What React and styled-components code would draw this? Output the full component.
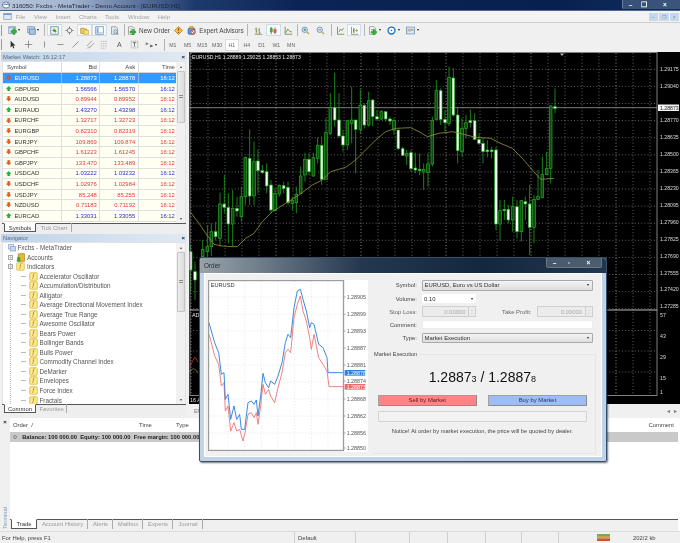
import React from "react";
import styled, { createGlobalStyle } from "styled-components";

const Global = createGlobalStyle`
  html, body { margin: 0; padding: 0; overflow: hidden; background: #f0f0f0; }
  * { box-sizing: border-box; }
`;

const Page = styled.div`
  position: relative;
  width: 680px;
  height: 543px;
  overflow: hidden;
  display: flex;
  flex-direction: column;
  background: #f0f0f0;
  font-family: "Liberation Sans", Arial, sans-serif;
  font-size: 6px;
  color: #333;
  filter: blur(0.3px);
`;

/* title bar */
const TitleBar = styled.div`
  height: 11px;
  flex: none;
  display: flex;
  align-items: center;
  justify-content: space-between;
  padding-left: 2px;
  background: linear-gradient(90deg, #b9c7dc 0, #a4b4cf 70px, #5e769f 135px, #1e3a6c 195px, #0c2455 300px, #08204f 560px, #12305f 680px);
  border-bottom: 1px solid #53678c;
`;
const TitleLeft = styled.div`
  display: flex;
  align-items: center;
  gap: 2px;
  color: #1e2430;
  font-size: 6.2px;
`;
const CaptionGroup = styled.div`
  display: flex;
  align-self: stretch;
  margin-bottom: 1px;
  background: rgba(150, 165, 190, 0.32);
  border-left: 1px solid #6b7f9e;
  border-radius: 0 0 0 2px;
`;
const CaptionBtn = styled.span`
  width: ${(p) => p.$w}px;
  display: flex;
  align-items: center;
  justify-content: center;
  color: #fff;
  font-size: 6.5px;
  font-weight: bold;
`;

/* menu */
const MenuBar = styled.div`
  height: 12px;
  flex: none;
  display: flex;
  align-items: center;
  padding-left: 3px;
  background: #f3f3f3;
  border-bottom: 1px solid #cfcfcf;
  color: #a2a2a2;
  font-size: 6px;
`;
const MenuItem = styled.span`
  width: ${(p) => p.$w}px;
  flex: none;
`;
const MdiGroup = styled.div`
  margin-left: auto;
  display: flex;
  gap: 1px;
  padding-right: 1px;
`;
const MdiBtn = styled.span`
  width: 9.5px;
  height: 8px;
  background: #c5d8ec;
  display: flex;
  align-items: center;
  justify-content: center;
  color: #7e90a8;
  font-size: 5px;
`;

/* toolbars */
const Toolbar = styled.div`
  height: 14.5px;
  flex: none;
  display: flex;
  align-items: center;
  padding-left: 1px;
  background: #f0f0f0;
`;
const Grip = styled.span`
  width: 1px;
  height: 11px;
  margin-right: 3px;
  background: #9a9a9a;
`;
const Tool = styled.span`
  width: ${(p) => p.$w || 15}px;
  height: 12px;
  flex: none;
  display: flex;
  align-items: center;
  justify-content: center;
  gap: 1.5px;
  border: 1px solid ${(p) => (p.$on ? "#d0dbe8" : "transparent")};
  background: ${(p) => (p.$on ? "#f7fafd" : "transparent")};
`;
const TextTool = styled(Tool)`
  gap: 3px;
  color: #444;
  font-size: 6.4px;
  white-space: nowrap;
`;
const ToolLetter = styled.span`
  color: #555;
  font-size: 7px;
`;
const Period = styled.span`
  width: 14.8px;
  height: 12px;
  flex: none;
  display: flex;
  align-items: center;
  justify-content: center;
  color: #666;
  font-size: 5.2px;
  border: 1px solid ${(p) => (p.$on ? "#dcdcdc" : "transparent")};
  background: ${(p) => (p.$on ? "#fff" : "transparent")};
`;
const Sep = styled.span`
  width: 1px;
  height: 12px;
  flex: none;
  margin: 0 ${(p) => p.$r}px 0 ${(p) => p.$l}px;
  background: #b4b4b4;
`;
const Caret = styled.span`
  width: 0;
  height: 0;
  flex: none;
  border-left: 1.5px solid transparent;
  border-right: 1.5px solid transparent;
  border-top: 2px solid #222;
`;

/* main */
const Main = styled.div`
  height: 366px;
  flex: none;
  display: flex;
`;
const LeftCol = styled.div`
  width: 189px;
  flex: none;
  display: flex;
  flex-direction: column;
`;
const Panel = styled.div`
  height: ${(p) => p.$h}px;
  flex: none;
  display: flex;
  flex-direction: column;
  padding: 0 3px 0 2px;
`;
const PanelHead = styled.div`
  height: ${(p) => p.$h || 9}px;
  flex: none;
  display: flex;
  align-items: center;
  justify-content: space-between;
  padding: 0 2px;
  margin: 0 -1px;
  background: linear-gradient(90deg, #c0d3e8, #d6e3f1 70%, #dfe9f3);
  color: #5b6b7d;
  font-size: 5.9px;
`;
const PanelClose = styled.span`
  color: #111;
  font-size: 6px;
  font-weight: bold;
`;
const PanelBody = styled.div`
  flex: 1;
  min-height: 0;
  display: flex;
  background: #fff;
  border: 1px solid #e2e2e2;
  border-bottom: 0;
`;
const Scroll = styled.div`
  width: 9px;
  flex: none;
  display: flex;
  flex-direction: column;
  background: #f1f1f1;
  color: #444;
  font-size: 4px;
  align-items: center;
  padding-top: 2px;
`;
const ScrollThumb = styled.div`
  width: 8px;
  height: ${(p) => p.$h}px;
  margin-top: 2px;
  background: linear-gradient(90deg, #ececec, #dcdcdc);
  border: 1px solid #c4c4c4;
  border-radius: 1px;
  display: flex;
  align-items: center;
  justify-content: center;
`;
const ScrollGrip = styled.span`
  width: 4px;
  height: 4px;
  background: repeating-linear-gradient(#8a8a8a 0 1px, transparent 1px 2px);
`;
const ScrollEnd = styled.span`
  margin-top: auto;
  margin-bottom: 2px;
`;
const TabStrip = styled.div`
  height: ${(p) => p.$h || 11}px;
  flex: none;
  display: flex;
  align-items: flex-start;
  padding-left: ${(p) => p.$l || 2}px;
  border-top: 1px solid #555;
  background: #eee;
  color: #9a9a9a;
  font-size: 5.9px;
`;
const Tab = styled.span`
  display: flex;
  align-items: center;
  justify-content: center;
  height: 9px;
  width: ${(p) => p.$w}px;
  margin-top: -1px;
  flex: none;
  ${(p) =>
    p.$on
      ? "background:#fff; color:#333; border:1px solid #555; border-top-color:#fff;"
      : "border-right:1px solid #aaa; margin-left:1px;"}
`;

/* market watch */
const MarketTable = styled.div`
  flex: 1;
  min-width: 0;
  overflow: hidden;
`;
const MarketRow = styled.div`
  display: grid;
  grid-template-columns: 58px 38.4px 38.3px 39.7px;
  height: ${(p) => p.$h || 10.6}px;
  align-items: stretch;
  font-size: 5.9px;
  background: ${(p) => (p.$head ? "#fff" : p.$sel ? "#3399ff" : "#fffff2")};
  color: ${(p) => (p.$head ? "#444" : p.$sel ? "#fff" : "#333")};
  border-bottom: 1px solid ${(p) => (p.$head ? "#d5d5d5" : "#dedede")};
`;
const SymbolCell = styled.span`
  display: flex;
  align-items: center;
  gap: 3px;
  padding-left: ${(p) => (p.$head ? 4 : 3)}px;
`;
const NumCell = styled.span`
  display: flex;
  align-items: center;
  justify-content: flex-end;
  padding-right: 2.5px;
  border-left: 1px solid ${(p) => (p.$sel ? "#83bdf5" : "#dedede")};
  color: ${(p) => p.$c};
`;

/* navigator */
const Tree = styled.div`
  flex: 1;
  min-width: 0;
  overflow: hidden;
  position: relative;
`;
const TreeRow = styled.div`
  height: 9.53px;
  display: flex;
  align-items: center;
  gap: 2px;
  padding-left: ${(p) => p.$pad}px;
  color: #555;
  font-size: 6.3px;
  white-space: nowrap;
`;
const TreeSign = styled.span`
  width: 5px;
  height: 5px;
  border: 1px solid #aaa;
  background: #fff;
  color: #666;
  font-size: 4.5px;
  line-height: 3px;
  text-align: center;
  margin-right: 1px;
`;
const TreeDash = styled.span`
  width: 5px;
  height: 1px;
  background: #bbb;
  margin-right: 0.5px;
`;
const TreeLine = styled.span`
  position: absolute;
  left: 7px;
  top: 14px;
  bottom: 0;
  border-left: 1px dotted #bbb;
`;

/* chart column */
const RightCol = styled.div`
  flex: 1;
  min-width: 0;
  display: flex;
  flex-direction: column;
`;
const ChartSvg = styled.svg`
  display: block;
  width: 491px;
  height: 352px;
  flex: none;
  background: #000;
`;
const ChartTabs = styled.div`
  flex: 1;
  display: flex;
  align-items: center;
  padding: 0 3px;
  color: #777;
  font-size: 5.9px;
  gap: 4px;
`;
const ChartTab = styled.span`
  margin-right: auto;
  padding: 0 2px;
`;

/* terminal */
const Terminal = styled.div`
  height: 113px;
  flex: none;
  display: flex;
`;
const TermStrip = styled.div`
  width: 10px;
  flex: none;
  display: flex;
  flex-direction: column;
  align-items: center;
  background: #f0f0f0;
`;
const TermClose = styled.span`
  color: #111;
  font-weight: bold;
  font-size: 6px;
  line-height: 8px;
`;
const TermLabel = styled.span`
  margin-top: auto;
  margin-bottom: 2px;
  writing-mode: vertical-rl;
  transform: rotate(180deg);
  color: #7f96b0;
  font-size: 5.8px;
`;
const TermPanel = styled.div`
  flex: 1;
  min-width: 0;
  display: flex;
  flex-direction: column;
  background: #fff;
`;
const TermHead = styled.div`
  height: 14px;
  flex: none;
  display: grid;
  grid-template-columns: 126px 37px 1fr auto;
  align-items: center;
  padding: 0 6px 0 3px;
  color: #444;
  font-size: 5.9px;
`;
const BalanceRow = styled.div`
  height: 10px;
  flex: none;
  margin-right: 2px;
  display: flex;
  align-items: center;
  background: #c9c9c9;
  padding-left: 3px;
  gap: 3.2px;
  color: #222;
  font-weight: bold;
  font-size: 5.8px;
  white-space: nowrap;
`;
const BalanceDot = styled.span`
  width: 4px;
  height: 4px;
  border-radius: 50%;
  border: 1px solid #888;
  margin-right: 2px;
`;
const TermTabs = styled(TabStrip)`
  margin-top: auto;
  height: 12px;
  background: #f0f0f0;
  padding-left: 1px;
  margin-right: 2px;
`;
const TermTab = styled(Tab)`
  height: 10px;
`;

/* status */
const StatusBar = styled.div`
  height: 12px;
  flex: none;
  display: grid;
  grid-template-columns: 295px 61px 54px 38px 38px 36px 37px 1fr;
  align-items: center;
  background: #f0f0f0;
  border-top: 1px solid #dcdcdc;
  color: #444;
  font-size: 5.9px;
`;
const StatusCell = styled.span`
  height: 100%;
  display: flex;
  align-items: center;
  padding-left: ${(p) => p.$pad || 0}px;
  border-right: 1px solid ${(p) => (p.$end ? "transparent" : "#cfcfcf")};
`;
const StatusEnd = styled(StatusCell)`
  gap: 23px;
  padding-left: 38px;
`;
const ConnBars = styled.svg`
  display: block;
  flex: none;
  width: 13px;
  height: 7px;
`;

/* order dialog */
const Dialog = styled.div`
  position: absolute;
  left: 199px;
  top: 257px;
  width: 408px;
  height: 205px;
  display: flex;
  flex-direction: column;
  padding: 0 4px 4px;
  border: 1px solid #39506c;
  border-radius: 3px 3px 2px 2px;
  background: linear-gradient(90deg, #c3d3e6, #bed3e9);
  box-shadow: 1px 1px 2px rgba(0, 0, 0, 0.55);
`;
const DialogTitle = styled.div`
  position: relative;
  height: 15px;
  flex: none;
  margin: 0 -4px;
  display: flex;
  justify-content: space-between;
  padding-left: 4px;
  background: linear-gradient(90deg, #99a2a8 0, #6f7d8b 60px, #24384f 160px, #13273f 280px, #20384f 400px);
  color: #2b2f33;
  font-size: 6.4px;
  border-radius: 3px 3px 0 0;
`;
const DialogName = styled.span`
  padding-top: 4px;
`;
const DialogCaps = styled.div`
  display: flex;
  height: 10px;
  margin-right: 4px;
  background: rgba(130, 140, 150, 0.45);
  border: 1px solid rgba(120, 135, 150, 0.7);
  border-top: 0;
  border-radius: 0 0 2px 2px;
`;
const DialogBody = styled.div`
  flex: 1;
  min-height: 0;
  display: flex;
  padding: 6px 0 0 3px;
  background: #f0f0f0;
  border: 1px solid #fff;
`;
const OrderChart = styled.svg`
  display: block;
  width: 160px;
  height: 172px;
  flex: none;
  background: #fff;
`;
const Form = styled.div`
  width: 222px;
  flex: none;
  margin-left: 6px;
  display: flex;
  flex-direction: column;
`;
const FormRow = styled.div`
  height: ${(p) => p.$h}px;
  flex: none;
  display: grid;
  grid-template-columns: ${(p) => p.$cols || "43px 171px"};
  align-items: stretch;
  margin-bottom: 3.4px;
  column-gap: 5px;
  font-size: 5.9px;
  color: #444;
`;
const FormLabel = styled.span`
  display: flex;
  align-items: center;
  justify-content: flex-end;
  color: ${(p) => p.$c || "#444"};
`;
const Select = styled.span`
  display: flex;
  align-items: center;
  justify-content: space-between;
  padding: 0 3px 0 1.5px;
  background: linear-gradient(#f4f4f4, #dedede);
  border: 1px solid #a9a9a9;
  border-radius: 1px;
  color: #333;
`;
const Combo = styled(Select)`
  width: 54px;
  padding-left: 2px;
  background: #fff;
  border: 0;
  color: #333;
`;
const Spin = styled.span`
  display: flex;
  align-items: center;
  justify-content: flex-end;
  background: #ececec;
  border: 1px solid #cfcfcf;
  color: #aaa;
`;
const SpinBtn = styled.span`
  width: 7px;
  height: 100%;
  margin-left: 2.5px;
  border-left: 1px solid #cfcfcf;
  display: flex;
  flex-direction: column;
  align-items: center;
  justify-content: space-around;
  padding: 1.5px 0;
`;
const Tri = styled.span`
  width: 0;
  height: 0;
  border-left: 1.4px solid transparent;
  border-right: 1.4px solid transparent;
  ${(p) => (p.$up ? "border-bottom:1.6px solid #bbb;" : "border-top:1.6px solid #bbb;")}
`;
const TextInput = styled.span`
  background: #fff;
  border: 1px solid #ececec;
`;
const Group = styled.div`
  position: relative;
  margin-top: 7px;
  width: 222px;
  height: 100px;
  padding: 14px 8.3px 0 4px;
  border-top: 1px solid #e6e6e6;
  border-right: 1px solid #e6e6e6;
  border-bottom: 1px solid #e6e6e6;
`;
const GroupLabel = styled.span`
  position: absolute;
  left: 0;
  top: -3.5px;
  padding-right: 2px;
  background: #f0f0f0;
  color: #444;
  font-size: 5.6px;
`;
const Prices = styled.div`
  height: 17px;
  text-align: center;
  color: #111;
  font-size: 14px;
  line-height: 17px;
  white-space: pre;
`;
const Small = styled.span`
  font-size: 9px;
`;
const Buttons = styled.div`
  margin-top: 9px;
  display: flex;
  justify-content: space-between;
`;
const MarketBtn = styled.span`
  width: 98.5px;
  height: 11px;
  display: flex;
  align-items: center;
  justify-content: center;
  background: ${(p) => p.$bg};
  border: 1px solid #a0a0a0;
  border-right-color: #8c8c8c;
  border-bottom-color: #8c8c8c;
  color: ${(p) => p.$c};
  font-size: 5.9px;
`;
const Progress = styled.div`
  margin-top: 5px;
  height: 11px;
  background: #f2f2f2;
  border: 1px solid #d4d4d4;
  border-radius: 1px;
`;
const Notice = styled.div`
  margin-top: 6px;
  text-align: center;
  color: #444;
  font-size: 5.75px;
  white-space: nowrap;
`;

/* ---------- icons ---------- */
const Ico = ({ s = 9, children, vb = "0 0 12 12" }) => (
  <svg width={s} height={s} viewBox={vb} style={{ display: "block", flex: "none" }}>
    {children}
  </svg>
);
const Doc = () => <path d="M2 1h6l2 2v8H2z" fill="#fff" stroke="#8b8b8b" />;
const GreenPlus = ({ x = 0, y = 0 }) => (
  <path transform={`translate(${x} ${y})`} d="M6 4h2.6v2.6h2.6v2.6H8.6v2.6H6V9.2H3.4V6.6H6z" fill="#2fb52f" stroke="#178017" strokeWidth="0.4" />
);
const icons = {
  logo: (
    <>
      <ellipse cx="6" cy="6" rx="5.5" ry="4.5" fill="#fff" stroke="#2b4a9a" />
      <path d="M2 6.5l2.5-2.5 2 2 2-2L10 6.5" fill="none" stroke="#2b4a9a" strokeWidth="1.4" />
    </>
  ),
  mdi: (
    <>
      <rect x="1" y="2" width="10" height="8" fill="#dfe8f4" stroke="#8aa0c0" />
      <rect x="1" y="2" width="10" height="2" fill="#7c9ac8" />
    </>
  ),
  newChart: (
    <>
      <rect x="1" y="1" width="9" height="9" fill="#dbe6f2" stroke="#7d93ad" />
      <rect x="1" y="1" width="9" height="2" fill="#9db6d3" />
      <GreenPlus x="0.5" y="-0.5" />
    </>
  ),
  profiles: (
    <>
      <rect x="1" y="1" width="9" height="8" fill="#c9d9ec" stroke="#6f8fb8" />
      <rect x="3" y="4" width="8" height="7" fill="#a9c3e2" stroke="#5d7fae" />
    </>
  ),
  market: (
    <>
      <rect x="1" y="1" width="10" height="10" fill="#eaf4ea" stroke="#5f7f9f" />
      <path d="M3 6l3-3v2h2v2H6v1z" fill="#2fa52f" />
      <path d="M9 6.5l-2 3v-1.5H5v-1.5z" fill="#e0662a" />
    </>
  ),
  cross: (
    <>
      <circle cx="6" cy="6" r="3" fill="none" stroke="#6b6b6b" />
      <path d="M6 0.5v3M6 8.5v3M0.5 6h3M8.5 6h3" stroke="#6b6b6b" />
    </>
  ),
  navigator: (
    <>
      <path d="M1 3h4l1 1h3v6H1z" fill="#f4d15b" stroke="#a98a2c" />
      <path d="M5 5h4l1 1h2v5H5z" fill="#f7de7e" stroke="#a98a2c" strokeWidth="0.7" />
    </>
  ),
  terminal: (
    <>
      <rect x="1" y="1" width="10" height="10" fill="#fff" stroke="#5f85b5" />
      <rect x="2" y="2" width="3" height="8" fill="#8fb2dc" />
      <rect x="5" y="8" width="5" height="2" fill="#bcd1ea" />
    </>
  ),
  tester: (
    <>
      <path d="M2 1h6l2 2v8H2z" fill="#e6e6e6" stroke="#8f8f8f" />
      <circle cx="7.5" cy="7.5" r="2.4" fill="#cfe0f2" stroke="#6c88a8" />
      <path d="M9.2 9.2l2 2" stroke="#5a6e86" />
    </>
  ),
  newOrder: (
    <>
      <Doc />
      <path d="M3.5 3.5h4M3.5 5.5h3" stroke="#aaa" strokeWidth="0.8" />
      <GreenPlus x="0.5" y="0.2" />
    </>
  ),
  editor: (
    <>
      <path d="M6 0.7L11.3 6 6 11.3 0.7 6z" fill="#f4c62e" stroke="#a3801c" />
      <path d="M6 3v3.5" stroke="#c0392b" strokeWidth="1.6" />
      <circle cx="6" cy="8.5" r="0.9" fill="#c0392b" />
    </>
  ),
  expert: (
    <>
      <rect x="1.5" y="3" width="9" height="8" rx="1.5" fill="#5d9ad8" stroke="#2f5f98" />
      <path d="M3 3a3 3 0 0 1 6 0z" fill="#f0b429" stroke="#a97c10" strokeWidth="0.6" />
      <circle cx="8" cy="8" r="2.8" fill="#fff" stroke="#d8321f" strokeWidth="1.2" />
      <path d="M6 6l4 4" stroke="#d8321f" strokeWidth="1.1" />
    </>
  ),
  bars: <path d="M3 2v8M1.5 4H3M3 7h1.5M7 3v8M5.5 5H7M7 9h1.5M1 11h10" stroke="#6d7f3f" fill="none" />,
  candles: (
    <>
      <path d="M3 1v10M8 2v9" stroke="#3f7a2e" />
      <rect x="1.5" y="3" width="3" height="5" fill="#47b13c" stroke="#3f7a2e" strokeWidth="0.5" />
      <rect x="6.5" y="5" width="3" height="4" fill="#e2602a" stroke="#a0451c" strokeWidth="0.5" />
    </>
  ),
  line: <path d="M1.5 1v10H11M2.5 9L5 4l2.5 3 3 1" stroke="#5f7f3f" fill="none" />,
  zoomIn: (
    <>
      <circle cx="5" cy="5" r="3.6" fill="#d9eaf8" stroke="#4d82b8" />
      <path d="M3.3 5h3.4M5 3.3v3.4" stroke="#2c7d2c" />
      <path d="M7.8 7.8l3 3" stroke="#c49a27" strokeWidth="1.6" />
    </>
  ),
  zoomOut: (
    <>
      <circle cx="5" cy="5" r="3.6" fill="#d9eaf8" stroke="#4d82b8" />
      <path d="M3.3 5h3.4" stroke="#c0392b" />
      <path d="M7.8 7.8l3 3" stroke="#c49a27" strokeWidth="1.6" />
    </>
  ),
  autoScroll: <path d="M2 1v10h9M4 8l2-4 2 2 2-3" fill="none" stroke="#5f7f3f" />,
  shift: (
    <>
      <path d="M2 1v10h9" fill="none" stroke="#8a7a4a" />
      <rect x="4" y="3" width="2" height="6" fill="#47b13c" />
      <path d="M7 6h3M10 6l-1.5-1.5M10 6l-1.5 1.5" stroke="#d8501f" />
    </>
  ),
  indicatorAdd: (
    <>
      <Doc />
      <path d="M3.5 3.5l2 2 2-2" stroke="#888" fill="none" />
      <GreenPlus x="0.5" y="0.4" />
    </>
  ),
  clock: (
    <>
      <circle cx="6" cy="6" r="4.6" fill="#fff" stroke="#1d72c4" strokeWidth="1.8" />
      <circle cx="6" cy="6" r="1" fill="#555" />
    </>
  ),
  template: (
    <>
      <rect x="0.7" y="1.5" width="10.6" height="9" fill="#dfeaf6" stroke="#6b8fb5" />
      <path d="M2 4.5h8" stroke="#7aa26b" />
      <path d="M2 7c2-2 3 1 5-1s2 1 3 0" fill="none" stroke="#d06a3a" />
    </>
  ),
  cursor: <path d="M3.5 1v9l2.2-2 1.5 3.2 1.4-.7-1.5-3.1H10z" fill="#333" />,
  crosshair: <path d="M6 1v10M1 6h10" stroke="#777" />,
  vline: <path d="M6 2v8" stroke="#777" />,
  hline: <path d="M2 6h8" stroke="#777" />,
  trend: <path d="M2 10l8-8" stroke="#777" />,
  channel: (
    <>
      <path d="M1 8l7-7M4 11l7-7" stroke="#888" />
      <path d="M2 11l3-3" stroke="#444" strokeDasharray="1 1" />
    </>
  ),
  fibo: <path d="M1 2h9M1 5h9M1 8h9M1 11h6" stroke="#aaa" strokeDasharray="2 1" />,
  tbox: (
    <>
      <rect x="1.5" y="1.5" width="9" height="9" fill="none" stroke="#999" strokeDasharray="1.5 1" />
      <path d="M3.5 3.5h5M6 3.5v5.5" stroke="#555" />
    </>
  ),
  shapes: (
    <>
      <path d="M1 3l4 2-4 2z" fill="#777" />
      <path d="M7 6l4 2-4 2z" fill="#555" />
    </>
  ),
  folderF: (
    <>
      <rect x="1" y="1" width="10" height="10" rx="1" fill="#ffe98a" stroke="#d4b23f" />
      <text x="4.6" y="8.6" fontSize="7" fontStyle="italic" fill="#6a5310" fontFamily="Liberation Serif">f</text>
    </>
  ),
  accounts: (
    <>
      <rect x="3" y="1" width="9" height="10" rx="1" fill="#e6b93a" stroke="#a8801c" />
      <circle cx="3.5" cy="7" r="2" fill="#2fa52f" />
      <rect x="1" y="8.5" width="5" height="3" fill="#2fa52f" />
    </>
  ),
  metatrader: (
    <>
      <rect x="0.5" y="1" width="8" height="6.5" fill="#dde8f5" stroke="#7f9fc5" />
      <rect x="3.5" y="4" width="8" height="6.5" fill="#c8d9ee" stroke="#7f9fc5" />
    </>
  ),
};
const I = ({ n, s }) => <Ico s={s}>{icons[n]}</Ico>;
const Arrow = ({ up }) => (
  <Ico s={5.4}>
    {up ? (
      <path d="M6 .5L11.5 6H8.4v5.5H3.6V6H.5z" fill="#21b33a" stroke="#118026" strokeWidth=".6" />
    ) : (
      <path d="M6 11.5L.5 6h3.1V.5h4.8V6h3.1z" fill="#ea5a1c" stroke="#b23c0e" strokeWidth=".6" />
    )}
  </Ico>
);

/* ---------- data ---------- */
const BLUE = "#2b2bd6";
const RED = "#e8363c";
const quotes = [
  ["EURUSD", "1.28873", "1.28878", 0, 1],
  ["GBPUSD", "1.56566", "1.56570", 1],
  ["AUDUSD", "0.89944", "0.89952", 0],
  ["EURAUD", "1.43270", "1.43298", 1],
  ["EURCHF", "1.32717", "1.32723", 0],
  ["EURGBP", "0.82310", "0.82319", 0],
  ["EURJPY", "109.869", "109.874", 0],
  ["GBPCHF", "1.61223", "1.61245", 0],
  ["GBPJPY", "133.470", "133.489", 0],
  ["USDCAD", "1.03222", "1.03232", 1],
  ["USDCHF", "1.02976", "1.02984", 0],
  ["USDJPY", "85.248", "85.255", 0],
  ["NZDUSD", "0.71183", "0.71192", 0],
  ["EURCAD", "1.33031", "1.33055", 1],
];
const indicators = [
  "Accelerator Oscillator",
  "Accumulation/Distribution",
  "Alligator",
  "Average Directional Movement Index",
  "Average True Range",
  "Awesome Oscillator",
  "Bears Power",
  "Bollinger Bands",
  "Bulls Power",
  "Commodity Channel Index",
  "DeMarker",
  "Envelopes",
  "Force Index",
  "Fractals",
];

/* x, high, low, bodyTop, bodyBottom, white? in 3x crop units: X = 190 + x/3, Y = 50 + y/3 */
const c1 = [
  [5, 585, 720, 605, 660, 1], [18, 635, 750, 665, 690, 1], [41, 570, 640, 598, 620, 0], [55, 525, 640, 590, 605, 0],
  [67, 520, 618, 545, 590, 0], [80, 515, 570, 545, 560, 1], [93, 428, 590, 462, 565, 0], [106, 375, 490, 462, 472, 1],
  [118, 430, 580, 472, 522, 1], [131, 420, 590, 475, 522, 0], [144, 440, 500, 475, 483, 1], [157, 410, 515, 440, 500, 0],
  [169, 320, 465, 322, 440, 0], [182, 238, 465, 325, 438, 1], [195, 275, 465, 335, 438, 0], [207, 300, 430, 333, 362, 1],
  [220, 345, 372, 362, 368, 1], [233, 340, 430, 365, 408, 1], [246, 390, 490, 405, 480, 1], [258, 415, 485, 430, 482, 0],
  [271, 403, 440, 406, 432, 0], [284, 395, 430, 407, 416, 1], [297, 395, 465, 412, 458, 1], [310, 440, 480, 452, 460, 0],
  [322, 410, 490, 433, 458, 0], [335, 350, 430, 378, 430, 0], [348, 308, 395, 328, 375, 0], [360, 310, 375, 328, 365, 1],
  [373, 308, 380, 323, 378, 0], [386, 262, 340, 286, 325, 0], [398, 260, 405, 286, 388, 1], [411, 205, 390, 248, 388, 0],
  [424, 130, 255, 172, 250, 0], [437, 68, 230, 172, 210, 1], [450, 130, 262, 210, 258, 1], [462, 240, 305, 258, 285, 1],
  [475, 235, 300, 212, 285, 0], [488, 110, 280, 210, 220, 0], [500, 220, 370, 210, 238, 1], [514, 118, 250, 166, 238, 0],
  [526, 160, 235, 166, 225, 1], [539, 125, 230, 152, 225, 0], [551, 148, 228, 150, 200, 1], [564, 180, 210, 200, 207, 1],
  [577, 180, 210, 185, 207, 0], [590, 185, 215, 185, 207, 1], [603, 200, 225, 207, 213, 1], [615, 205, 255, 212, 240, 0],
  [628, 240, 300, 240, 296, 1], [641, 290, 318, 296, 316, 1], [653, 300, 345, 310, 318, 0], [666, 300, 365, 308, 356, 1],
  [679, 308, 370, 354, 360, 1], [692, 310, 375, 358, 362, 1], [704, 340, 420, 358, 366, 0], [717, 310, 410, 342, 368, 0],
  [730, 200, 350, 212, 342, 0],
];
/* second crop: X = 430 + x/3 */
const c2 = [
  [22, 90, 210, 122, 208, 0], [35, 115, 225, 122, 208, 1], [48, 180, 245, 208, 218, 1], [60, 50, 228, 82, 220, 0],
  [73, 55, 200, 84, 195, 1], [86, 170, 340, 195, 302, 1], [99, 205, 322, 235, 305, 0], [111, 195, 265, 218, 235, 0],
  [124, 178, 232, 212, 218, 1], [137, 190, 270, 212, 268, 1], [150, 250, 285, 268, 280, 1], [162, 265, 340, 280, 305, 1],
  [175, 270, 322, 300, 305, 1], [188, 290, 325, 300, 305, 1], [201, 290, 540, 300, 522, 1], [213, 450, 572, 482, 522, 0],
  [226, 450, 510, 478, 482, 1], [238, 465, 520, 478, 510, 1], [251, 440, 545, 470, 510, 0], [264, 450, 565, 470, 545, 1],
  [277, 450, 575, 452, 545, 0], [289, 440, 510, 455, 462, 1], [302, 405, 615, 462, 532, 1], [315, 435, 580, 448, 532, 0],
  [327, 360, 450, 440, 448, 0], [340, 320, 445, 374, 442, 0], [353, 305, 375, 356, 374, 0], [365, 165, 400, 168, 355, 0],
  [378, 115, 190, 170, 175, 1],
];
const candles = [
  ...c1.map(([x, h, l, t, b, w]) => ({ x: 190 + x / 3, h: 50 + h / 3, l: 50 + l / 3, t: 50 + t / 3, b: 50 + b / 3, w })),
  ...c2.map(([x, h, l, t, b, w]) => ({ x: 430 + x / 3, h: 50 + h / 3, l: 50 + l / 3, t: 50 + t / 3, b: 50 + b / 3, w })),
];
const maPts = [
  [3, 485], [30, 520], [50, 550], [75, 583], [100, 588], [130, 590], [145, 590], [170, 565], [195, 550], [220, 515], [250, 485],
  [290, 460], [330, 435], [370, 405], [400, 390], [425, 365], [470, 352], [500, 330], [530, 300], [560, 270], [590, 245],
  [620, 235], [665, 233], [690, 245], [715, 260], [750, 250], [790, 245], [820, 252], [860, 262], [905, 265], [930, 278],
  [970, 295], [1000, 325], [1030, 360], [1055, 388], [1095, 385],
].map(([x, y]) => `${190 + x / 3},${50 + y / 3}`).join(" ");
const priceAxis = ["1.29175", "1.29040", null, "1.28770", "1.28635", "1.28500", "1.28365", "1.28230", "1.28095", "1.27960", "1.27825", "1.27690", "1.27555", "1.27420", "1.27285"];
const subAxis = [["57", 317], ["43", 338], ["29", 359], ["15", 380], ["1", 394]];
const vGrid = Array.from({ length: 28 }, (_, i) => 192 + 17 * i);
const hGrid = Array.from({ length: 15 }, (_, i) => 69.3 + 17.1 * i).filter((y) => y < 309);
const subGrid = [330.5, 351, 372];

const askLine = "43,220 50,245 60,280 72,310 80,375 88,370 92,450 100,435 108,510 118,470 126,510 135,495 140,540 150,540 160,460 170,455 178,465 185,452 190,500 198,440 205,372 212,400 222,415 228,395 240,405 250,380 262,340 272,280 280,255 288,265 298,175 308,125 317,120 325,150 335,185 345,235 350,220 358,225 372,285 385,295 397,325 400,370 448,370";
const bidLine = "43,255 50,280 60,320 72,345 80,410 88,400 92,485 100,470 108,545 118,520 126,545 135,540 145,575 152,545 160,495 170,490 178,505 185,490 190,525 198,470 205,405 212,435 222,420 228,440 240,460 250,415 262,370 272,310 280,300 288,310 298,205 308,165 317,140 325,185 335,215 345,265 350,300 358,255 372,325 385,345 397,365 403,412 448,412";
const orderAxis = [["1.28905", 149], ["1.28899", 201], ["1.28893", 251], ["1.28887", 302], ["1.28881", 353], ["1.28874", 401], ["1.28868", 455], ["1.28862", 506], ["1.28856", 557], ["1.28850", 602]];

const TradingChart = () => (
  <ChartSvg viewBox="190 52 491 352" xmlns="http://www.w3.org/2000/svg">
    {vGrid.map((x, i) => (
      <line key={x} x1={x} x2={x} y1="53" y2="396" stroke={i % 5 === 0 ? "#b5b5b5" : "#7c7c7c"} strokeWidth="0.8" strokeDasharray="1 2.2" />
    ))}
    {hGrid.map((y) => (
      <line key={y} x1="191" x2="658" y1={y} y2={y} stroke="#7c7c7c" strokeWidth="0.8" strokeDasharray="1 2.2" />
    ))}
    {subGrid.map((y) => (
      <line key={y} x1="191" x2="658" y1={y} y2={y} stroke="#7c7c7c" strokeWidth="0.8" strokeDasharray="1 2.2" />
    ))}
    <line x1="190" x2="658" y1="107.7" y2="107.7" stroke="#8a8a8a" strokeWidth="0.9" />
    {candles.map((c) => (
      <g key={c.x}>
        <line x1={c.x} x2={c.x} y1={c.h} y2={c.l} stroke="#1c9a1c" strokeWidth="0.85" />
        <rect
          x={c.x - 1.35}
          y={c.t}
          width="2.7"
          height={Math.max(c.b - c.t, 1)}
          fill={c.w ? "#f4fff4" : "#0c4f0c"}
          stroke="#27a527"
          strokeWidth="0.7"
        />
      </g>
    ))}
    <polyline points={maPts} fill="none" stroke="#8f8a3c" strokeWidth="0.85" />
    <path d="M191 366l5-9 3 5" fill="none" stroke="#c8312c" strokeWidth="0.8" />
    <path d="M190 372q5-7 9 1" fill="none" stroke="#6f7f3a" strokeWidth="0.8" />
    <path d="M561 53.5h4l-2 2.5z" fill="#bbb" />
    <rect x="191" y="52.5" width="467" height="343" fill="none" stroke="#8e8e8e" strokeWidth="0.9" />
    <line x1="191" x2="658" y1="310" y2="310" stroke="#b8b8b8" strokeWidth="1" />
    <text x="193" y="59" fill="#e6e6e6" fontSize="5.1" fontFamily="Liberation Sans">EURUSD,H1  1.28889 1.29025 1.28853 1.28873</text>
    <text x="193" y="317" fill="#e6e6e6" fontSize="5.4" fontFamily="Liberation Sans">AD</text>
    <text x="191" y="402" fill="#e6e6e6" fontSize="5.4" fontFamily="Liberation Sans">16 A</text>
    {priceAxis.map((p, i) =>
      p ? (
        <text key={p} x="661" y={71 + 16.96 * i} fill="#dcdcdc" fontSize="5.2" fontFamily="Liberation Sans">{p}</text>
      ) : null
    )}
    <rect x="659" y="104.5" width="21" height="6.5" fill="#f4f4f4" />
    <text x="661" y="109.7" fill="#222" fontSize="5.2" fontFamily="Liberation Sans">1.28873</text>
    {subAxis.map(([t, y]) => (
      <text key={t} x="661" y={y} fill="#dcdcdc" fontSize="5.2" fontFamily="Liberation Sans">{t}</text>
    ))}
  </ChartSvg>
);

const OrderMiniChart = () => (
  <OrderChart viewBox="40 92 480 516" xmlns="http://www.w3.org/2000/svg">
    {[100, 150, 200, 250, 300, 350, 400].map((x) => (
      <line key={x} x1={x} x2={x} y1="95" y2="603" stroke="#dcdcdc" strokeWidth="1.6" strokeDasharray="4 5" />
    ))}
    {[143, 195, 245, 296, 347, 398, 449, 500, 551].map((y) => (
      <line key={y} x1="43" x2="445" y1={y} y2={y} stroke="#dcdcdc" strokeWidth="1.6" strokeDasharray="4 5" />
    ))}
    <text x="48" y="112" fontSize="17" fontFamily="Liberation Sans" fill="#333">EURUSD</text>
    <polyline points={bidLine} fill="none" stroke="#ea6f6f" strokeWidth="2.6" />
    <polyline points={askLine} fill="none" stroke="#2f7fdf" strokeWidth="2.8" />
    <rect x="41.5" y="93.5" width="405" height="510" fill="none" stroke="#9b9b9b" strokeWidth="4" />
    {orderAxis.map(([t, y]) => (
      <g key={t}>
        <line x1="448" x2="453" y1={y - 6} y2={y - 6} stroke="#888" strokeWidth="2" />
        <text x="456" y={y} fontSize="16" fontFamily="Liberation Sans" fill="#555">{t}</text>
      </g>
    ))}
    <rect x="450" y="362" width="62" height="17" fill="#2f7fdf" />
    <text x="456" y="376" fontSize="16" fontFamily="Liberation Sans" fill="#fff">1.28878</text>
    <rect x="450" y="404" width="62" height="17" fill="#f06a6a" />
    <text x="456" y="418" fontSize="16" fontFamily="Liberation Sans" fill="#fff">1.28873</text>
  </OrderChart>
);

const Drop = ({ n, w }) => (
  <Tool $w={w || 19}>
    <I n={n} />
    <Caret />
  </Tool>
);

export default function App() {
  return (
    <>
      <Global />
      <Page>
        <TitleBar>
          <TitleLeft>
            <I n="logo" s={8} />
            <span>316050: Fxcbs - MetaTrader - Demo Account - [EURUSD,H1]</span>
          </TitleLeft>
          <CaptionGroup>
            <CaptionBtn $w={15}>–</CaptionBtn>
            <CaptionBtn $w={12}>❐</CaptionBtn>
            <CaptionBtn $w={30}>×</CaptionBtn>
          </CaptionGroup>
        </TitleBar>

        <MenuBar>
          <MenuItem $w={12.7}><I n="mdi" /></MenuItem>
          <MenuItem $w={18.3}>File</MenuItem>
          <MenuItem $w={21.7}>View</MenuItem>
          <MenuItem $w={23.3}>Insert</MenuItem>
          <MenuItem $w={26}>Charts</MenuItem>
          <MenuItem $w={23}>Tools</MenuItem>
          <MenuItem $w={29.7}>Window</MenuItem>
          <MenuItem $w={20}>Help</MenuItem>
          <MdiGroup>
            <MdiBtn>–</MdiBtn>
            <MdiBtn>❐</MdiBtn>
            <MdiBtn>×</MdiBtn>
          </MdiGroup>
        </MenuBar>

        <Toolbar>
          <Grip />
          <Drop n="newChart" w={18} />
          <Drop n="profiles" w={20} />
          <Sep $l={1.25} $r={1.25} />
          <Tool $on><I n="market" /></Tool>
          <Tool><I n="cross" /></Tool>
          <Tool $on><I n="navigator" /></Tool>
          <Tool $on><I n="terminal" /></Tool>
          <Tool><I n="tester" /></Tool>
          <Sep $l={2} $r={2} />
          <TextTool $w={44}><I n="newOrder" /><span>New Order</span></TextTool>
          <Tool><I n="editor" /></Tool>
          <TextTool $w={60}><I n="expert" /><span>Expert Advisors</span></TextTool>
          <Sep $l={1} $r={3} />
          <Tool><I n="bars" /></Tool>
          <Tool $on><I n="candles" /></Tool>
          <Tool><I n="line" /></Tool>
          <Sep $l={1.7} $r={0.3} />
          <Tool><I n="zoomIn" /></Tool>
          <Tool><I n="zoomOut" /></Tool>
          <Sep $l={2.5} $r={1.5} />
          <Tool $w={14}><I n="autoScroll" /></Tool>
          <Tool $w={14} $on><I n="shift" /></Tool>
          <Sep $l={2.5} $r={0} />
          <Drop n="indicatorAdd" />
          <Drop n="clock" />
          <Drop n="template" />
        </Toolbar>

        <Toolbar>
          <Grip />
          <Tool $w={15.4}><I n="cursor" /></Tool>
          <Tool $w={15.8}><I n="crosshair" /></Tool>
          <Tool $w={17.4}><I n="vline" /></Tool>
          <Tool $w={14.2}><I n="hline" /></Tool>
          <Tool $w={16.4}><I n="trend" /></Tool>
          <Tool $w={12}><I n="channel" /></Tool>
          <Tool $w={17.6}><I n="fibo" /></Tool>
          <Tool $w={11}><ToolLetter>A</ToolLetter></Tool>
          <Tool $w={19}><I n="tbox" /></Tool>
          <Drop n="shapes" w={14} />
          <Sep $l={6} $r={0.6} />
          <Period>M1</Period>
          <Period>M5</Period>
          <Period>M15</Period>
          <Period>M30</Period>
          <Period $on>H1</Period>
          <Period>H4</Period>
          <Period>D1</Period>
          <Period>W1</Period>
          <Period>MN</Period>
        </Toolbar>

        <Main>
          <LeftCol>
            <Panel $h={182}>
              <PanelHead>
                <span>Market Watch: 16:12:17</span>
                <PanelClose>×</PanelClose>
              </PanelHead>
              <PanelBody>
                <MarketTable>
                  <MarketRow $head $h={11.2}>
                    <SymbolCell $head>Symbol</SymbolCell>
                    <NumCell $c="#444">Bid</NumCell>
                    <NumCell $c="#444">Ask</NumCell>
                    <NumCell $c="#444">Time</NumCell>
                  </MarketRow>
                  {quotes.map(([sym, bid, ask, up, sel]) => {
                    const c = sel ? "#fff" : up ? BLUE : RED;
                    return (
                      <MarketRow key={sym} $sel={sel}>
                        <SymbolCell><Arrow up={up} />{sym}</SymbolCell>
                        <NumCell $c={c} $sel={sel}>{bid}</NumCell>
                        <NumCell $c={c} $sel={sel}>{ask}</NumCell>
                        <NumCell $c={c} $sel={sel}>16:12</NumCell>
                      </MarketRow>
                    );
                  })}
                </MarketTable>
                <Scroll>
                  ▴
                  <ScrollThumb $h={52}><ScrollGrip /></ScrollThumb>
                  <ScrollEnd>▾</ScrollEnd>
                </Scroll>
              </PanelBody>
              <TabStrip $l={2}>
                <Tab $on $w={32}>Symbols</Tab>
                <Tab $w={35}>Tick Chart</Tab>
              </TabStrip>
            </Panel>

            <Panel $h={184}>
              <PanelHead $h={8}>
                <span>Navigator</span>
                <PanelClose>×</PanelClose>
              </PanelHead>
              <PanelBody>
                <Tree>
                  <TreeLine />
                  <TreeRow $pad={4.5}><I n="metatrader" s={8} /><span>Fxcbs - MetaTrader</span></TreeRow>
                  <TreeRow $pad={5}><TreeSign>+</TreeSign><I n="accounts" s={9} /><span>Accounts</span></TreeRow>
                  <TreeRow $pad={5}><TreeSign>–</TreeSign><I n="folderF" s={9} /><span>Indicators</span></TreeRow>
                  {indicators.map((name) => (
                    <TreeRow key={name} $pad={18}><TreeDash /><I n="folderF" s={9} /><span>{name}</span></TreeRow>
                  ))}
                </Tree>
                <Scroll>
                  ▴
                  <ScrollThumb $h={60}><ScrollGrip /></ScrollThumb>
                  <ScrollEnd>▾</ScrollEnd>
                </Scroll>
              </PanelBody>
              <TabStrip $l={2} $h={14}>
                <Tab $on $w={32}>Common</Tab>
                <Tab $w={30}>Favorites</Tab>
              </TabStrip>
            </Panel>
          </LeftCol>

          <RightCol>
            <TradingChart />
            <ChartTabs>
              <ChartTab>EURUSD,H1</ChartTab>
              <span>◂</span>
              <span>▸</span>
            </ChartTabs>
          </RightCol>
        </Main>

        <Terminal>
          <TermStrip>
            <TermClose>×</TermClose>
            <TermLabel>Terminal</TermLabel>
          </TermStrip>
          <TermPanel>
            <TermHead>
              <span>Order &nbsp;/</span>
              <span>Time</span>
              <span>Type</span>
              <span>Comment</span>
            </TermHead>
            <BalanceRow>
              <BalanceDot />
              <span>Balance: 100 000.00</span>
              <span>Equity: 100 000.00</span>
              <span>Free margin: 100 000.00</span>
            </BalanceRow>
            <TermTabs>
              <TermTab $on $w={26}>Trade</TermTab>
              <TermTab $w={50}>Account History</TermTab>
              <TermTab $w={24}>Alerts</TermTab>
              <TermTab $w={29}>Mailbox</TermTab>
              <TermTab $w={29}>Experts</TermTab>
              <TermTab $w={29}>Journal</TermTab>
            </TermTabs>
          </TermPanel>
        </Terminal>

        <StatusBar>
          <StatusCell $pad={2}>For Help, press F1</StatusCell>
          <StatusCell $pad={3}>Default</StatusCell>
          <StatusCell />
          <StatusCell />
          <StatusCell />
          <StatusCell />
          <StatusCell />
          <StatusEnd $end>
            <ConnBars viewBox="0 0 13 7">
              <rect width="13" height="2" fill="#6fae4a" />
              <rect y="2" width="13" height="2.5" fill="#c8a54a" />
              <rect y="4.5" width="13" height="2.5" fill="#d8502a" />
            </ConnBars>
            <span>202/2 kb</span>
          </StatusEnd>
        </StatusBar>

        <Dialog>
          <DialogTitle>
            <DialogName>Order</DialogName>
            <DialogCaps>
              <CaptionBtn $w={15}>–</CaptionBtn>
              <CaptionBtn $w={14}>▫</CaptionBtn>
              <CaptionBtn $w={25}>×</CaptionBtn>
            </DialogCaps>
          </DialogTitle>
          <DialogBody>
            <OrderMiniChart />
            <Form>
              <FormRow $h={10.7}>
                <FormLabel>Symbol:</FormLabel>
                <Select>EURUSD, Euro vs US Dollar<Caret /></Select>
              </FormRow>
              <FormRow $h={9}>
                <FormLabel>Volume:</FormLabel>
                <Combo>0.10<Caret /></Combo>
              </FormRow>
              <FormRow $h={10.5} $cols="43px 54px 50.5px 56px">
                <FormLabel $c="#666">Stop Loss:</FormLabel>
                <Spin>0.00000<SpinBtn><Tri $up /><Tri /></SpinBtn></Spin>
                <FormLabel $c="#666">Take Profit:</FormLabel>
                <Spin>0.00000<SpinBtn><Tri $up /><Tri /></SpinBtn></Spin>
              </FormRow>
              <FormRow $h={9}>
                <FormLabel>Comment:</FormLabel>
                <TextInput />
              </FormRow>
              <FormRow $h={10.7}>
                <FormLabel>Type:</FormLabel>
                <Select>Market Execution<Caret /></Select>
              </FormRow>
              <Group>
                <GroupLabel>Market Execution</GroupLabel>
                <Prices>1.2887<Small>3</Small>{" / "}1.2887<Small>8</Small></Prices>
                <Buttons>
                  <MarketBtn $bg="#ff8585" $c="#5a2020">Sell by Market</MarketBtn>
                  <MarketBtn $bg="#9dbdf6" $c="#2a3a60">Buy by Market</MarketBtn>
                </Buttons>
                <Progress />
                <Notice>Notice! At order by market execution, the price will be quoted by dealer.</Notice>
              </Group>
            </Form>
          </DialogBody>
        </Dialog>
      </Page>
    </>
  );
}
